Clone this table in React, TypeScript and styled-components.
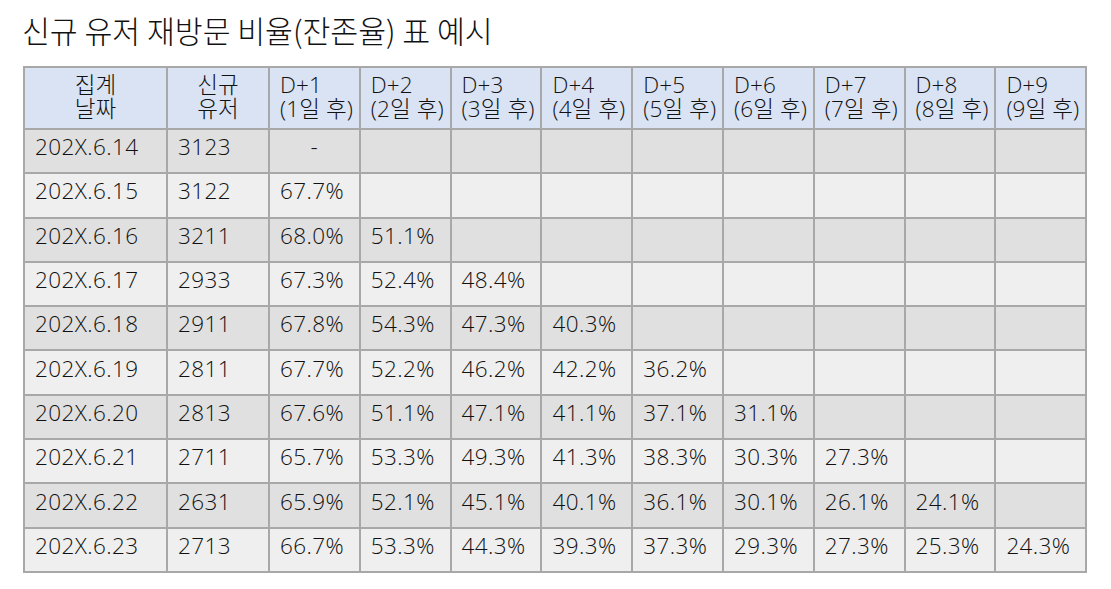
import React from "react";
import styled, { createGlobalStyle } from "styled-components";

const Global = createGlobalStyle`
  html, body { margin: 0; padding: 0; background: #ffffff; }
  body { font-family: "Open Sans", "Noto Sans CJK KR", sans-serif; color: #1a1a1a; }
`;

const Page = styled.div`
  padding: 8px 0 0 23px;
  width: 1111px;
  box-sizing: border-box;
`;

const Title = styled.h1`
  margin: 0 0 14px -1px;
  font-family: "Noto Sans CJK KR", sans-serif;
  font-weight: 300;
  font-size: 30.3px;
  line-height: 44px;
  color: #111;
`;

const Table = styled.table`
  border-collapse: collapse;
  table-layout: fixed;
  width: 1062px;
  font-size: 22.5px;
  font-weight: 300;
  color: #111;
`;

const HeadRow = styled.tr`
  height: 62px;
  background: #dae3f3;
`;

const Row = styled.tr<{ $dark: boolean }>`
  height: 44.3px;
  background: ${(p) => (p.$dark ? "#e0e0e0" : "#efefef")};
`;

const Th = styled.th<{ $center?: boolean }>`
  border: 2px solid #a8a8a8;
  font-weight: 300;
  text-align: ${(p) => (p.$center ? "center" : "left")};
  padding: 0 0 2px ${(p) => (p.$center ? "0" : "10px")};
  line-height: 24px;
  vertical-align: middle;
  white-space: nowrap;
  letter-spacing: 0.1px;
`;

const Td = styled.td<{ $center?: boolean }>`
  border: 2px solid #a8a8a8;
  padding: 0 0 8px ${(p) => (p.$center ? "0" : "10px")};
  text-align: ${(p) => (p.$center ? "center" : "left")};
  vertical-align: middle;
  white-space: nowrap;
  line-height: 26px;
  letter-spacing: 0.4px;
`;

const rows: [string, string, string[]][] = [
  ["202X.6.14", "3123", ["-"]],
  ["202X.6.15", "3122", ["67.7%"]],
  ["202X.6.16", "3211", ["68.0%", "51.1%"]],
  ["202X.6.17", "2933", ["67.3%", "52.4%", "48.4%"]],
  ["202X.6.18", "2911", ["67.8%", "54.3%", "47.3%", "40.3%"]],
  ["202X.6.19", "2811", ["67.7%", "52.2%", "46.2%", "42.2%", "36.2%"]],
  ["202X.6.20", "2813", ["67.6%", "51.1%", "47.1%", "41.1%", "37.1%", "31.1%"]],
  ["202X.6.21", "2711", ["65.7%", "53.3%", "49.3%", "41.3%", "38.3%", "30.3%", "27.3%"]],
  ["202X.6.22", "2631", ["65.9%", "52.1%", "45.1%", "40.1%", "36.1%", "30.1%", "26.1%", "24.1%"]],
  ["202X.6.23", "2713", ["66.7%", "53.3%", "44.3%", "39.3%", "37.3%", "29.3%", "27.3%", "25.3%", "24.3%"]],
];

const days = [1, 2, 3, 4, 5, 6, 7, 8, 9];

export default function App() {
  return (
    <Page>
      <Global />
      <Title>신규 유저 재방문 비율(잔존율) 표 예시</Title>
      <Table>
        <colgroup>
          <col style={{ width: 143 }} />
          <col style={{ width: 102 }} />
          {days.map((d) => (
            <col key={d} style={{ width: 90.8 }} />
          ))}
        </colgroup>
        <thead>
          <HeadRow>
            <Th $center>
              집계
              <br />
              날짜
            </Th>
            <Th $center>
              신규
              <br />
              유저
            </Th>
            {days.map((d) => (
              <Th key={d}>
                D+{d}
                <br />({d}일 후)
              </Th>
            ))}
          </HeadRow>
        </thead>
        <tbody>
          {rows.map(([date, users, vals], i) => (
            <Row key={date} $dark={i % 2 === 0}>
              <Td>{date}</Td>
              <Td>{users}</Td>
              {days.map((d, j) => {
                const v = vals[j] ?? "";
                return (
                  <Td key={d} $center={v === "-"}>
                    {v}
                  </Td>
                );
              })}
            </Row>
          ))}
        </tbody>
      </Table>
    </Page>
  );
}
